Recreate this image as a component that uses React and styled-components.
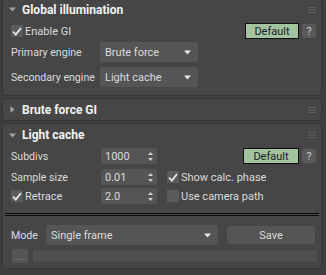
import React from "react";
import styled, { createGlobalStyle } from "styled-components";

const GlobalStyle = createGlobalStyle`
  html, body {
    margin: 0;
    padding: 0;
    background: #3e3e3e;
  }
  body {
    font-family: Roboto, "Liberation Sans", sans-serif;
    font-size: 10.6px;
    color: #dcdcdc;
  }
`;

const Page = styled.div`
  width: 326px;
  height: 275px;
  padding: 0 4px 0 2px;
  box-sizing: border-box;
  display: flex;
  flex-direction: column;
  gap: 2px;
  overflow: hidden;
`;

const Panel = styled.div`
  background: #464646;
  border: 1px solid #363636;
  border-radius: 3px;
  margin-top: ${(p) => p.$top || 0}px;
  padding-bottom: ${(p) => p.$pb || 0}px;
`;

const Header = styled.div`
  height: ${(p) => p.$h || 21}px;
  display: flex;
  align-items: center;
  padding: 0 6px 0 6px;
`;

const Arrow = styled.span`
  width: 13px;
  display: flex;
  align-items: center;
`;

const Title = styled.span`
  font-weight: bold;
  font-size: 12px;
  color: #f2f2f2;
  flex: 1;
`;

const Grip = styled.svg`
  width: 6px;
  height: 6px;
`;

const Row = styled.div`
  display: flex;
  align-items: center;
  height: ${(p) => p.$h || 16}px;
  margin-top: ${(p) => p.$mt || 0}px;
  padding-left: 8px;
`;

const Label = styled.span`
  width: ${(p) => p.$w || 89}px;
  color: #dcdcdc;
  white-space: nowrap;
`;

const Check = styled.label`
  display: flex;
  align-items: center;
  gap: 2px;
  width: ${(p) => (p.$w ? p.$w + "px" : "auto")};
  color: #dcdcdc;
  white-space: nowrap;
  font-size: 11px;
`;

const Box = styled.span`
  width: 12px;
  height: 12px;
  background: #5b5b5b;
  display: flex;
  align-items: center;
  justify-content: center;
`;

const Spacer = styled.div`
  flex: 1;
`;

const DefaultButton = styled.div`
  width: ${(p) => p.$w || 52}px;
  height: 14px;
  background: #a3c49f;
  border: 1px solid #111;
  color: #1a1a2a;
  font-size: 11px;
  display: flex;
  align-items: center;
  justify-content: center;
`;

const Help = styled.div`
  width: 14px;
  height: 14px;
  margin-left: 3px;
  margin-right: 5px;
  border-radius: 2px;
  background: #595959;
  color: #cfcfcf;
  display: flex;
  align-items: center;
  justify-content: center;
`;

const Select = styled.div`
  width: ${(p) => p.$w}px;
  height: 20px;
  box-sizing: border-box;
  background: #555555;
  border-radius: 2px;
  display: flex;
  align-items: center;
  padding: 0 7px 0 5px;
  color: #dcdcdc;
  font-size: 11px;
`;

const SelectText = styled.span`
  flex: 1;
`;

const Spinner = styled.div`
  width: 56px;
  height: 16px;
  box-sizing: border-box;
  background: #555555;
  border-radius: 2px;
  display: flex;
  align-items: center;
  padding: 0 4px 0 4px;
  margin-right: 10px;
  color: #dcdcdc;
  font-size: 11px;
`;

const Separator = styled.div`
  margin: 9px 2px 9px 2px;
  height: 1px;
  border-top: 1px solid #0e0e0e;
  border-bottom: 1px solid #0e0e0e;
`;

const SaveButton = styled.div`
  width: 88px;
  height: 18px;
  margin-left: 9px;
  border-radius: 3px;
  background: #555555;
  color: #dcdcdc;
  font-size: 11px;
  display: flex;
  align-items: center;
  justify-content: center;
`;

const DotsButton = styled.div`
  width: 16px;
  height: 14px;
  margin-left: 1px;
  border-radius: 2px;
  background: #555555;
  color: #8a8a8a;
  display: flex;
  align-items: flex-end;
  justify-content: center;
  font-size: 10px;
  line-height: 12px;
  letter-spacing: 0.5px;
`;

const PathField = styled.div`
  flex: 1;
  height: 14px;
  margin: 0 3px 0 4px;
  background: #4f4f4f;
  border: 1px solid #444;
  box-sizing: border-box;
`;

const Tri = ({ open }) => (
  <svg width="7" height="7" viewBox="0 0 7 7">
    {open ? (
      <polygon points="0,1.5 7,1.5 3.5,5.5" fill="#a0a0a0" />
    ) : (
      <polygon points="1.5,0 5.5,3.5 1.5,7" fill="#a0a0a0" />
    )}
  </svg>
);

const GripDots = () => (
  <Grip viewBox="0 0 6 6">
    {[0, 2.5, 5].map((y) =>
      [0, 2.5, 5].map((x) => (
        <rect key={x + "-" + y} x={x} y={y} width="1" height="1" fill="#8a8a8a" />
      ))
    )}
  </Grip>
);

const Tick = () => (
  <svg width="10" height="9" viewBox="0 0 10 9">
    <path d="M1 4.5 L3.8 7.5 L9 1" stroke="#e8e8e8" strokeWidth="1.8" fill="none" />
  </svg>
);

const DownArrow = () => (
  <svg width="7" height="5" viewBox="0 0 7 5">
    <polygon points="0,0.5 7,0.5 3.5,4.5" fill="#e6e6e6" />
  </svg>
);

const SpinArrows = () => (
  <svg width="5" height="9" viewBox="0 0 5 9">
    <polygon points="2.5,0 5,3 0,3" fill="#cfcfcf" />
    <polygon points="0,6 5,6 2.5,9" fill="#cfcfcf" />
  </svg>
);

const CheckBox = ({ checked, children, w }) => (
  <Check $w={w}>
    <Box>{checked && <Tick />}</Box>
    {children}
  </Check>
);

const Dropdown = ({ w, children }) => (
  <Select $w={w}>
    <SelectText>{children}</SelectText>
    <DownArrow />
  </Select>
);

const NumField = ({ children }) => (
  <Spinner>
    <SelectText>{children}</SelectText>
    <SpinArrows />
  </Spinner>
);

export default function App() {
  return (
    <>
      <GlobalStyle />
      <Page>
        <Panel $top={-2} $pb={8}>
          <Header $h={21}>
            <Arrow>
              <Tri open />
            </Arrow>
            <Title>Global illumination</Title>
            <GripDots />
          </Header>
          <Row $h={16} $mt={3}>
            <CheckBox checked>Enable GI</CheckBox>
            <Spacer />
            <DefaultButton $w={52}>Default</DefaultButton>
            <Help>?</Help>
          </Row>
          <Row $h={20} $mt={3}>
            <Label $w={89}>Primary engine</Label>
            <Dropdown w={98}>Brute force</Dropdown>
          </Row>
          <Row $h={20} $mt={5}>
            <Label $w={89}>Secondary engine</Label>
            <Dropdown w={98}>Light cache</Dropdown>
          </Row>
        </Panel>

        <Panel>
          <Header $h={21}>
            <Arrow>
              <Tri />
            </Arrow>
            <Title>Brute force GI</Title>
            <GripDots />
          </Header>
        </Panel>

        <Panel $pb={5}>
          <Header $h={22}>
            <Arrow>
              <Tri open />
            </Arrow>
            <Title>Light cache</Title>
            <GripDots />
          </Header>
          <Row $h={16} $mt={2}>
            <Label $w={90}>Subdivs</Label>
            <NumField>1000</NumField>
            <Spacer />
            <DefaultButton $w={54}>Default</DefaultButton>
            <Help>?</Help>
          </Row>
          <Row $h={16} $mt={5}>
            <Label $w={90}>Sample size</Label>
            <NumField>0.01</NumField>
            <CheckBox checked>Show calc. phase</CheckBox>
          </Row>
          <Row $h={16} $mt={3}>
            <CheckBox checked w={90}>
              Retrace
            </CheckBox>
            <NumField>2.0</NumField>
            <CheckBox>Use camera path</CheckBox>
          </Row>
          <Separator />
          <Row $h={20} $mt={0}>
            <Label $w={35}>Mode</Label>
            <Dropdown w={172}>Single frame</Dropdown>
            <SaveButton>Save</SaveButton>
          </Row>
          <Row $h={14} $mt={4}>
            <DotsButton>...</DotsButton>
            <PathField />
          </Row>
        </Panel>
      </Page>
    </>
  );
}
